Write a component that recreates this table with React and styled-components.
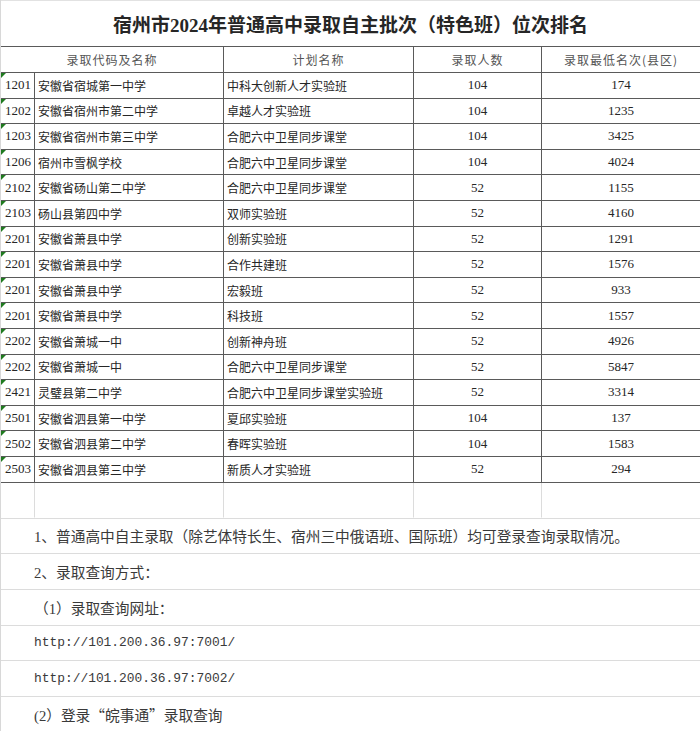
import styled, { createGlobalStyle } from "styled-components";

const rows = [
  ["1201", "安徽省宿城第一中学", "中科大创新人才实验班", "104", "174"],
  ["1202", "安徽省宿州市第二中学", "卓越人才实验班", "104", "1235"],
  ["1203", "安徽省宿州市第三中学", "合肥六中卫星同步课堂", "104", "3425"],
  ["1206", "宿州市雪枫学校", "合肥六中卫星同步课堂", "104", "4024"],
  ["2102", "安徽省砀山第二中学", "合肥六中卫星同步课堂", "52", "1155"],
  ["2103", "砀山县第四中学", "双师实验班", "52", "4160"],
  ["2201", "安徽省萧县中学", "创新实验班", "52", "1291"],
  ["2201", "安徽省萧县中学", "合作共建班", "52", "1576"],
  ["2201", "安徽省萧县中学", "宏毅班", "52", "933"],
  ["2201", "安徽省萧县中学", "科技班", "52", "1557"],
  ["2202", "安徽省萧城一中", "创新神舟班", "52", "4926"],
  ["2202", "安徽省萧城一中", "合肥六中卫星同步课堂", "52", "5847"],
  ["2421", "灵璧县第二中学", "合肥六中卫星同步课堂实验班", "52", "3314"],
  ["2501", "安徽省泗县第一中学", "夏邱实验班", "104", "137"],
  ["2502", "安徽省泗县第二中学", "春晖实验班", "104", "1583"],
  ["2503", "安徽省泗县第三中学", "新质人才实验班", "52", "294"],
];

const GlobalStyle = createGlobalStyle`
  body {
    margin: 0;
    background: #fff;
  }
`;

const Sheet = styled.div`
  width: 700px;
  height: 731px;
  overflow: hidden;
  background: #fff;
  border-left: 1px solid #d8d8d8;
  box-sizing: border-box;
`;

const Title = styled.h1`
  margin: 0;
  height: 46px;
  display: flex;
  align-items: center;
  justify-content: center;
  border-top: 1px solid #e2e2e2;
  box-sizing: border-box;
  font-family: "Liberation Serif", "Noto Sans CJK SC", serif;
  font-size: 19px;
  font-weight: 700;
  color: #262626;
`;

const Table = styled.table`
  width: 699px;
  table-layout: fixed;
  border-collapse: separate;
  border-spacing: 0;
  border-top: 1px solid #5a5a5a;
`;

const Th = styled.th`
  height: 25px;
  padding: 0;
  font-family: "Noto Sans CJK SC", sans-serif;
  font-size: 12px;
  font-weight: 400;
  color: #555;
  letter-spacing: 1px;
  text-align: center;
  border-right: 1px solid #5a5a5a;
  border-bottom: 1px solid #5a5a5a;
  &:last-child {
    border-right: none;
  }
`;

const Td = styled.td`
  position: relative;
  height: 24.6px;
  padding: 0 ${(p) => (p.$code ? "4px" : "3px")};
  font-family: ${(p) =>
    p.$num ? '"Liberation Serif", serif' : '"Noto Sans CJK SC", sans-serif'};
  font-size: ${(p) => (p.$num ? "13px" : "12px")};
  color: #262626;
  text-align: ${(p) => (p.$center ? "center" : "left")};
  white-space: nowrap;
  overflow: hidden;
  border-right: 1px solid ${(p) => (p.$blank ? "#dcdcdc" : "#5a5a5a")};
  border-bottom: 1px solid ${(p) => (p.$blank ? "transparent" : "#5a5a5a")};
  &:last-child {
    border-right: none;
  }
`;

const BlankCell = styled(Td)`
  height: 34px;
`;

const Flag = styled.span`
  position: absolute;
  top: 0;
  left: 0;
  width: 0;
  height: 0;
  border-top: 5px solid #1f7a1f;
  border-right: 5px solid transparent;
`;

const Notes = styled.div`
  border-top: 1px solid #dcdcdc;
`;

const NoteRow = styled.div`
  height: 35.7px;
  display: flex;
  align-items: center;
  padding-left: 33px;
  box-sizing: border-box;
  border-bottom: 1px solid #dcdcdc;
  font-family: ${(p) =>
    p.$mono
      ? '"Liberation Mono", monospace'
      : '"Liberation Serif", "Noto Sans CJK SC", serif'};
  font-size: ${(p) => (p.$mono ? "12.9px" : "14.7px")};
  color: #3a3a3a;
  white-space: nowrap;
`;

// full-width quote marks, as the CJK font draws them
const Quote = styled.span`
  font-family: "Noto Sans CJK SC", sans-serif;
`;

export default function App() {
  return (
    <>
      <GlobalStyle />
      <Sheet>
        <Title>宿州市2024年普通高中录取自主批次（特色班）位次排名</Title>
        <Table>
          <colgroup>
            <col style={{ width: 34 }} />
            <col style={{ width: 189 }} />
            <col style={{ width: 190 }} />
            <col style={{ width: 128 }} />
            <col style={{ width: 158 }} />
          </colgroup>
          <thead>
            <tr>
              <Th colSpan={2}>录取代码及名称</Th>
              <Th>计划名称</Th>
              <Th>录取人数</Th>
              <Th>录取最低名次(县区)</Th>
            </tr>
          </thead>
          <tbody>
            {rows.map(([code, school, plan, count, rank], i) => (
              <tr key={i}>
                <Td $code $num>
                  <Flag />
                  {code}
                </Td>
                <Td>{school}</Td>
                <Td>{plan}</Td>
                <Td $num $center>
                  {count}
                </Td>
                <Td $num $center>
                  {rank}
                </Td>
              </tr>
            ))}
            <tr>
              <BlankCell $blank />
              <BlankCell $blank />
              <BlankCell $blank />
              <BlankCell $blank />
              <BlankCell $blank />
            </tr>
          </tbody>
        </Table>
        <Notes>
          <NoteRow>1、普通高中自主录取（除艺体特长生、宿州三中俄语班、国际班）均可登录查询录取情况。</NoteRow>
          <NoteRow>2、录取查询方式：</NoteRow>
          <NoteRow>（1）录取查询网址：</NoteRow>
          <NoteRow $mono>http://101.200.36.97:7001/</NoteRow>
          <NoteRow $mono>http://101.200.36.97:7002/</NoteRow>
          <NoteRow>
            (2）登录<Quote>“</Quote>皖事通<Quote>”</Quote>录取查询
          </NoteRow>
        </Notes>
      </Sheet>
    </>
  );
}
